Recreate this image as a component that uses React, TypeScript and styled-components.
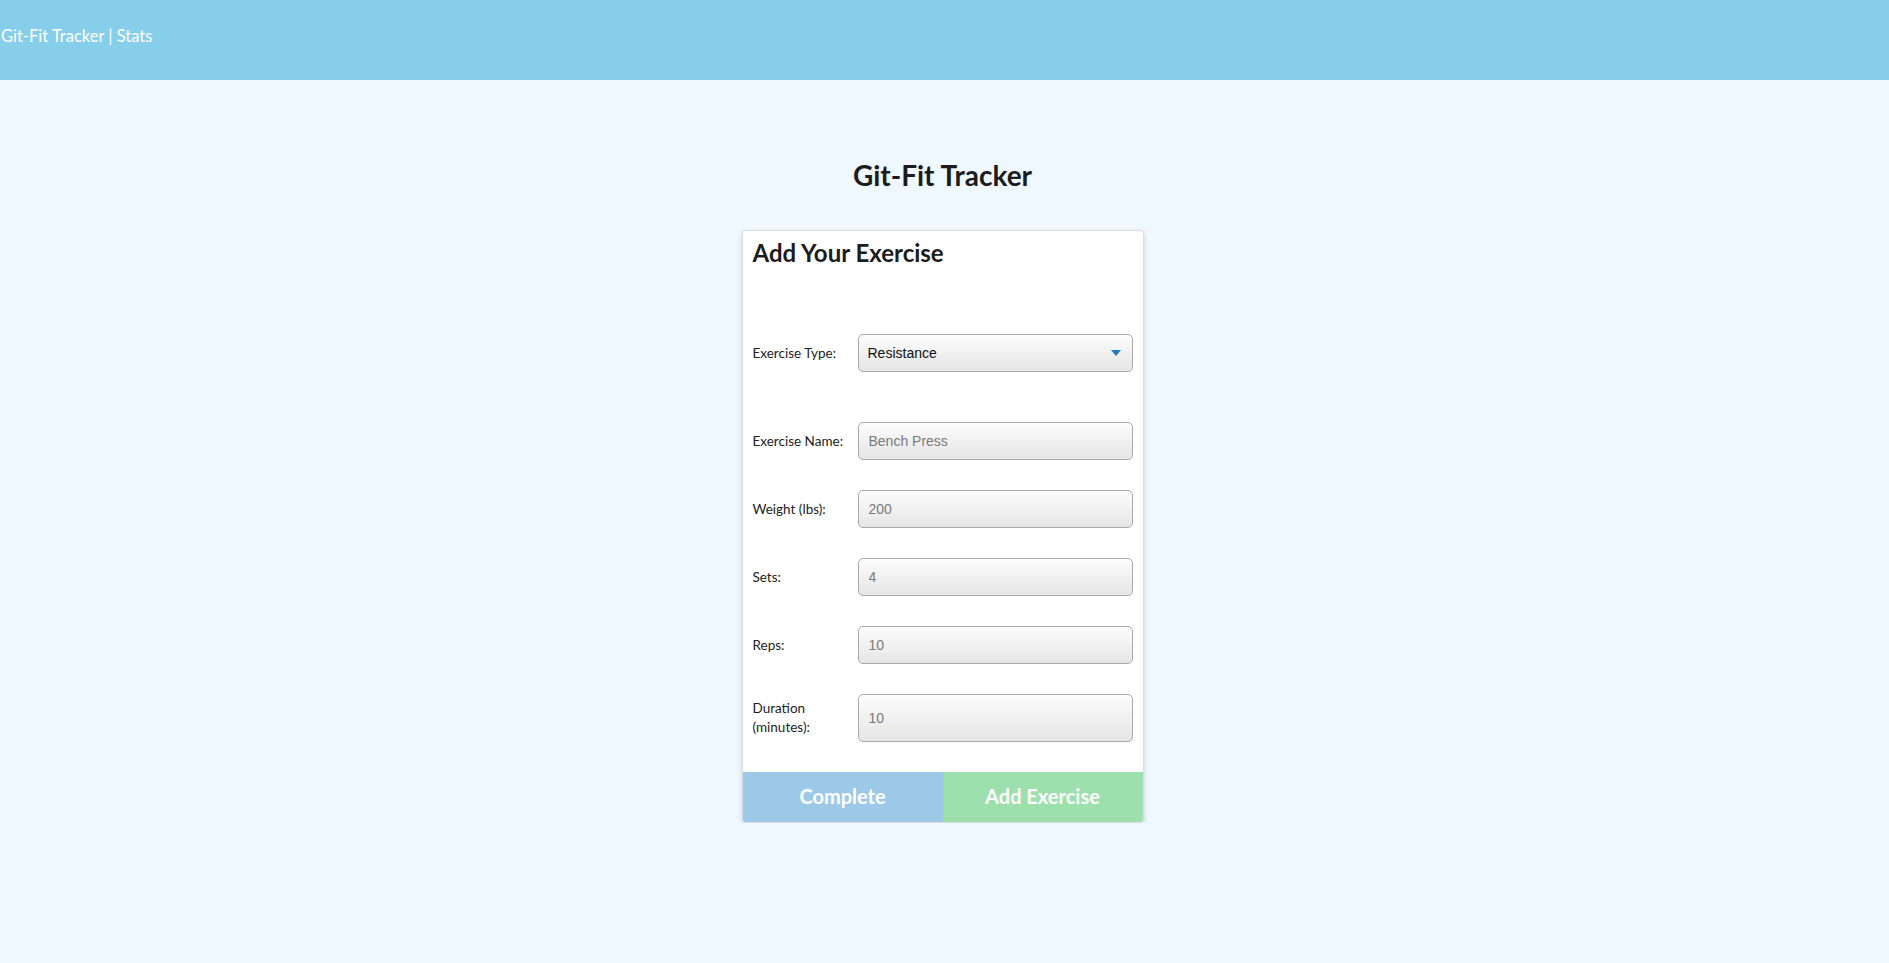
import React, { useState } from 'react';
import styled, { createGlobalStyle } from 'styled-components';

const GlobalStyle = createGlobalStyle`
  body {
    margin: 0;
    background: #f0f8ff;
    font-family: Lato, "Open Sans", sans-serif;
  }
`;

interface Field {
  label: string;
  placeholder: string;
  tall?: boolean;
}

const fields: Field[] = [
  { label: 'Exercise Name:', placeholder: 'Bench Press' },
  { label: 'Weight (lbs):', placeholder: '200' },
  { label: 'Sets:', placeholder: '4' },
  { label: 'Reps:', placeholder: '10' },
  { label: 'Duration (minutes):', placeholder: '10', tall: true },
];

const App: React.FC = () => {
  const [type, setType] = useState<string>('Resistance');

  return (
    <>
      <GlobalStyle />
      <Header>Git-Fit Tracker | Stats</Header>
      <Main>
        <Title>Git-Fit Tracker</Title>
        <Card>
          <CardTitle>Add Your Exercise</CardTitle>
          <Form>
            <Row>
              <Label>Exercise Type:</Label>
              <SelectWrap>
                <Select value={type} onChange={e => setType(e.target.value)}>
                  <option>Resistance</option>
                  <option>Cardio</option>
                </Select>
                <Caret width="10" height="6" viewBox="0 0 10 6">
                  <path d="M0 0 L10 0 L5 6 Z" fill="#1b7db3" />
                </Caret>
              </SelectWrap>
            </Row>
            <FieldList>
              {fields.map(f => (
                <Row key={f.label}>
                  <Label>{f.label}</Label>
                  <Input placeholder={f.placeholder} tall={f.tall} />
                </Row>
              ))}
            </FieldList>
          </Form>
          <Buttons>
            <Button color="#9dc9e9">Complete</Button>
            <Button color="#9de0ad">Add Exercise</Button>
          </Buttons>
        </Card>
      </Main>
    </>
  );
};

export default App;

const Header = styled.header`
  height: 80px;
  background: #87ceeb;
  color: #fff;
  font-size: 16.5px;
  display: flex;
  align-items: center;
  padding: 0 0 8px 1px;
  box-sizing: border-box;
`;

const Main = styled.main`
  display: flex;
  flex-direction: column;
  align-items: center;
  padding: 78px 4px 0 0;
`;

const Title = styled.h1`
  margin: 0 0 38px;
  font-size: 28px;
  line-height: 34px;
  font-weight: 700;
  color: #1c1c1c;
`;

const Card = styled.div`
  width: 400px;
  background: #fff;
  border: 1px solid #d8dde2;
  border-radius: 4px;
  box-shadow: 0 2px 5px rgba(0, 0, 0, 0.16);
  overflow: hidden;
`;

const CardTitle = styled.h2`
  margin: 0;
  padding: 7px 10px 0;
  font-size: 24px;
  line-height: 29px;
  font-weight: 700;
  color: #1c1c1c;
`;

const Form = styled.div`
  display: flex;
  flex-direction: column;
  gap: 50px;
  padding: 67px 10px 30px 10px;
`;

const FieldList = styled.div`
  display: flex;
  flex-direction: column;
  gap: 30px;
`;

const Row = styled.div`
  display: grid;
  grid-template-columns: 105px 1fr;
  align-items: center;
`;

const Label = styled.label`
  font-size: 13.5px;
  line-height: 19px;
  color: #222;
  padding-right: 6px;
`;

const fieldBox = `
  width: 100%;
  box-sizing: border-box;
  border: 1px solid #a9a9a9;
  border-radius: 5px;
  background: linear-gradient(#fdfdfd, #e5e5e5);
  font-family: "Liberation Sans", Arial, sans-serif;
  font-size: 14px;
  padding: 0 10px;
  outline: none;
`;

const SelectWrap = styled.div`
  position: relative;
`;

const Select = styled.select`
  ${fieldBox}
  height: 38px;
  appearance: none;
  color: #111;
  padding-left: 9px;
`;

const Caret = styled.svg`
  position: absolute;
  right: 12px;
  top: 16px;
  pointer-events: none;
`;

const Input = styled.input<{ tall?: boolean }>`
  ${fieldBox}
  height: ${p => (p.tall ? 48 : 38)}px;
  color: #333;
  &::placeholder {
    color: #7a7a7a;
  }
`;

const Buttons = styled.div`
  display: grid;
  grid-template-columns: 1fr 1fr;
`;

const Button = styled.button<{ color: string }>`
  height: 50px;
  padding: 0 0 3px;
  border: none;
  background: ${p => p.color};
  color: #fff;
  font-family: Lato, sans-serif;
  font-size: 20px;
  font-weight: 700;
  cursor: pointer;
`;
